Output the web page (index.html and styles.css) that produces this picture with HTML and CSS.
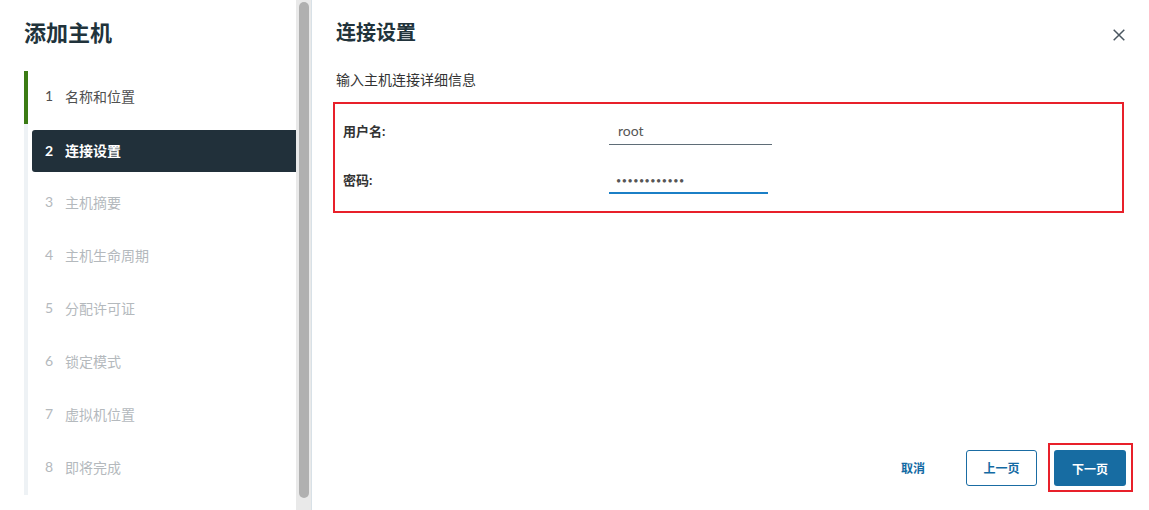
FILE: index.html
```html
<!DOCTYPE html>
<html lang="zh-CN">
<head>
<meta charset="utf-8">
<title>添加主机</title>
<link rel="stylesheet" href="styles.css">
</head>
<body>
<div class="wizard">
  <aside class="sidebar">
    <h1 class="wizard-title">添加主机</h1>
    <ol class="steps">
      <li class="step done"><span class="num">1</span><span class="label">名称和位置</span></li>
      <li class="step current"><div class="step-box"><span class="num">2</span><span class="label">连接设置</span></div></li>
      <li class="step disabled"><span class="num">3</span><span class="label">主机摘要</span></li>
      <li class="step disabled"><span class="num">4</span><span class="label">主机生命周期</span></li>
      <li class="step disabled"><span class="num">5</span><span class="label">分配许可证</span></li>
      <li class="step disabled"><span class="num">6</span><span class="label">锁定模式</span></li>
      <li class="step disabled"><span class="num">7</span><span class="label">虚拟机位置</span></li>
      <li class="step disabled"><span class="num">8</span><span class="label">即将完成</span></li>
    </ol>
  </aside>
  <div class="scrollbar"><div class="thumb"></div></div>
  <main class="content">
    <header class="content-header">
      <h2 class="page-title">连接设置</h2>
      <button class="close" aria-label="关闭">
        <svg width="12" height="12" viewBox="0 0 12 12"><path d="M0.7 0.7 L11.3 11.3 M11.3 0.7 L0.7 11.3" stroke="#4a5660" stroke-width="1.5" fill="none"/></svg>
      </button>
    </header>
    <p class="subtitle">输入主机连接详细信息</p>
    <form class="form-box">
      <div class="row">
        <label class="field-label" for="user">用户名:</label>
        <input class="field user" id="user" type="text" value="root">
      </div>
      <div class="row">
        <label class="field-label" for="pwd">密码:</label>
        <input class="field pwd" id="pwd" type="password" value="abcdefghijkl">
      </div>
    </form>
    <div class="spacer"></div>
    <footer class="footer">
      <button class="btn btn-link">取消</button>
      <button class="btn btn-outline">上一页</button>
      <span class="highlight"><button class="btn btn-primary">下一页</button></span>
    </footer>
  </main>
</div>
</body>
</html>
```

FILE: styles.css
```css
* { box-sizing: border-box; }
html, body { margin: 0; padding: 0; background: #fff; }
body {
  font-family: Lato, "Noto Sans CJK SC", "Noto Sans", sans-serif;
  color: #333;
  width: 1149px;
  height: 510px;
  overflow: hidden;
}
.wizard {
  display: flex;
  height: 510px;
}
.sidebar {
  width: 296px;
  flex: none;
  padding-top: 19px;
}
.wizard-title {
  margin: 0 0 24px 24px;
  font-size: 22px;
  line-height: 28px;
  font-weight: 600;
  color: #21333b;
}
.steps {
  list-style: none;
  margin: 0 0 0 24px;
  padding: 0;
}
.step {
  height: 53px;
  border-left: 4px solid #eef2f5;
  display: flex;
  align-items: center;
  padding: 0 0 4px 17px;
  font-size: 14px;
}
.step .num { width: 20px; flex: none; }
.step.done { border-left-color: #3b7b14; color: #4f4f4f; }
.step.disabled { color: #b4b9bd; }
.step.current {
  padding: 6px 0 5px 4px;
  align-items: stretch;
}
.step-box {
  flex: 1;
  background: #21303a;
  border-radius: 3px 0 0 3px;
  color: #fff;
  font-weight: 700;
  display: flex;
  align-items: center;
  padding: 0 0 2px 13px;
}
.scrollbar {
  width: 16px;
  flex: none;
  background: #e9e9e9;
  border-right: 1px solid #d8e1e7;
  padding: 2px 2px 12px 3px;
  display: flex;
}
.thumb {
  flex: 1;
  background: #b0b0b0;
  border-radius: 5px;
}
.content {
  flex: 1;
  display: flex;
  flex-direction: column;
  padding: 20px 23px 18px 24px;
}
.content-header {
  display: flex;
  justify-content: space-between;
  align-items: flex-start;
}
.page-title {
  margin: 0;
  font-size: 20px;
  line-height: 24px;
  font-weight: 600;
  color: #21333b;
}
.close {
  border: 0;
  background: none;
  padding: 0;
  margin: 9px 1px 0 0;
  width: 12px;
  height: 12px;
  display: flex;
}
.subtitle {
  margin: 26px 0 12px 0;
  font-size: 14px;
  line-height: 20px;
  color: #333;
}
.form-box {
  margin: 0 2px 0 -3px;
  border: 2px solid #e8202a;
  padding: 14px 0 17px 8px;
  display: flex;
  flex-direction: column;
  gap: 22px;
}
.row {
  display: flex;
  align-items: center;
}
.field-label {
  width: 266px;
  flex: none;
  font-size: 13px;
  font-weight: 700;
  color: #333;
  padding-bottom: 2px;
}
.field {
  height: 27px;
  border: 0;
  outline: none;
  background: transparent;
  font-family: Lato, "Noto Sans CJK SC", sans-serif;
  font-size: 14px;
  color: #565656;
}
.field.user {
  width: 163px;
  border-bottom: 1px solid #5f6d77;
  padding: 0 0 2px 9px;
}
.field.pwd {
  width: 159px;
  border-bottom: 2px solid #1b7fc6;
  padding: 1px 0 0 7px;
  font-size: 9px;
  letter-spacing: 0.5px;
}
.spacer { flex: 1; }
.footer {
  display: flex;
  justify-content: flex-end;
  align-items: center;
  margin-right: -7px;
}
.btn {
  height: 36px;
  width: 72px;
  border-radius: 3px;
  font-family: Lato, "Noto Sans CJK SC", sans-serif;
  font-size: 12px;
  font-weight: 700;
  cursor: pointer;
}
.btn-link {
  border: 0;
  background: none;
  color: #136aa3;
  margin-right: 17px;
}
.btn-outline {
  width: 71px;
  border: 1px solid #1a6ca3;
  background: #fff;
  color: #136aa3;
  margin-right: 11px;
}
.highlight {
  display: flex;
  border: 2px solid #e8202a;
  padding: 5px 5px 4px 4px;
}
.btn-primary {
  border: 0;
  background: #176ca2;
  color: #fff;
}
```
